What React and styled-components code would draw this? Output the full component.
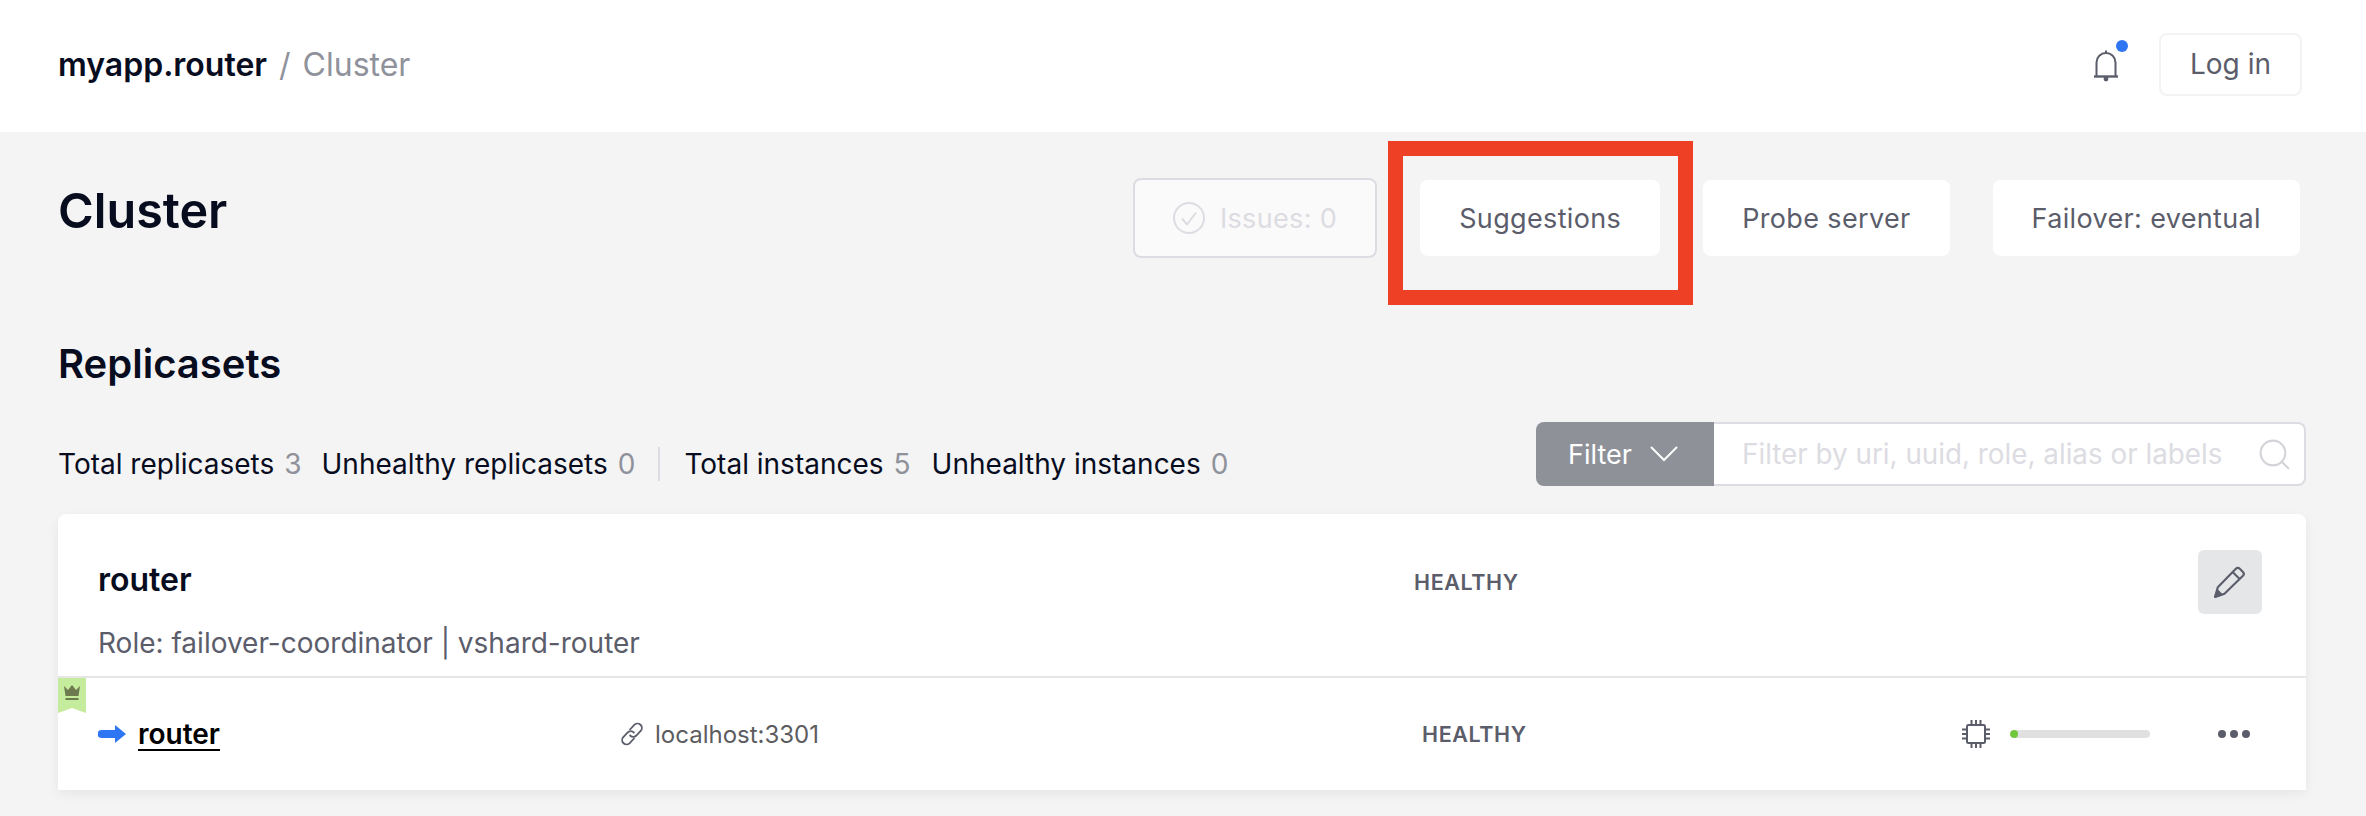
import styled, { createGlobalStyle } from 'styled-components'
import { Search } from 'lucide-react'

const GlobalStyles = createGlobalStyle`
	html, body {
		margin: 0;
		background: #f4f4f4;
		font-family: Inter, "Noto Sans", sans-serif;
		color: #070c1e;
	}
	* {
		box-sizing: border-box;
	}
`

const Page = styled.div`
	min-height: 816px;
	overflow: hidden;
`

const TopBar = styled.header`
	height: 132px;
	background: #fff;
	display: flex;
	align-items: center;
	justify-content: space-between;
	padding: 0 64px 4px 58px;
`

const Crumbs = styled.div`
	display: flex;
	align-items: baseline;
	font-size: 32px;
`

const AppName = styled.span`
	font-weight: 600;
`

const Slash = styled.span`
	color: #8f929b;
	margin: 0 12px;
`

const CrumbPage = styled.span`
	color: #8f929b;
`

const TopActions = styled.div`
	display: flex;
	align-items: center;
	gap: 41px;
`

const BellWrap = styled.div`
	position: relative;
	width: 24px;
	height: 32px;
	margin-top: 4px;
	svg {
		display: block;
	}
`

const BellDot = styled.span`
	position: absolute;
	top: -10px;
	right: -10px;
	width: 12px;
	height: 12px;
	border-radius: 50%;
	background: #2f76f5;
`

const LoginButton = styled.button`
	width: 143px;
	height: 63px;
	background: #fff;
	border: 2px solid #f3f3f3;
	border-radius: 8px;
	font: 400 28px Inter, sans-serif;
	color: #5b5d6b;
`

const Content = styled.main`
	padding: 0 60px 0 58px;
`

const TitleRow = styled.div`
	display: flex;
	justify-content: space-between;
	align-items: flex-start;
	padding: 46px 6px 0 0;
`

const PageTitle = styled.h1`
	margin: 0;
	font-size: 48.5px;
	line-height: 66px;
	font-weight: 600;
`

const Actions = styled.div`
	display: flex;
	align-items: center;
	gap: 43px;
`

const ActionButton = styled.button`
	position: relative;
	height: 76px;
	padding: 0 39px;
	background: #fff;
	border: 0;
	border-radius: 8px;
	font: 400 27px Inter, sans-serif;
	letter-spacing: 0.35px;
	color: #5b5d6b;
	white-space: nowrap;
`

const IssuesButton = styled(ActionButton)`
	display: flex;
	align-items: center;
	gap: 15px;
	height: 80px;
	padding: 0 38px;
	background: #fafafa;
	border: 2px solid #dcdce2;
	color: #dcdce2;
`

const Highlight = styled.span`
	position: absolute;
	top: -39px;
	bottom: -49px;
	left: -32px;
	right: -33px;
	border: 15px solid #ee4024;
	pointer-events: none;
`

const SectionTitle = styled.h2`
	margin: 80px 0 0;
	font-size: 40px;
	line-height: 52px;
	font-weight: 600;
`

const StatsRow = styled.div`
	display: flex;
	justify-content: space-between;
	align-items: center;
	margin-top: 32px;
`

const Stats = styled.div`
	display: flex;
	align-items: center;
	padding-top: 20px;
	font-size: 28px;
	font-weight: 400;
`

const Stat = styled.span`
	margin-right: ${(p) => p.$gap}px;
	white-space: nowrap;
`

const StatValue = styled.span`
	color: #8f929b;
	margin-left: 10px;
`

const StatDivider = styled.span`
	width: 2px;
	height: 34px;
	background: #dcdce2;
	margin-right: 24px;
`

const FilterGroup = styled.div`
	display: flex;
	width: 770px;
	height: 64px;
`

const FilterButton = styled.button`
	display: flex;
	align-items: center;
	gap: 18px;
	width: 178px;
	padding-left: 32px;
	background: #8e9198;
	border: 0;
	border-radius: 8px 0 0 8px;
	color: #fff;
	font: 400 27px Inter, sans-serif;
`

const FilterInput = styled.div`
	flex: 1;
	display: flex;
	align-items: center;
	justify-content: space-between;
	padding: 0 11px 0 28px;
	background: #fff;
	border: 2px solid #dcdce2;
	border-left: 0;
	border-radius: 0 8px 8px 0;
	color: #dcdce2;
	font-size: 27.8px;
	white-space: nowrap;
`

const Card = styled.section`
	margin-top: 28px;
	background: #fff;
	border-radius: 8px 8px 0 0;
	box-shadow: 0 4px 12px rgba(0, 0, 0, 0.06);
`

const CardHead = styled.div`
	display: grid;
	grid-template-columns: 1316px 1fr 64px;
	height: 162px;
	padding: 36px 44px 0 40px;
`

const NameBlock = styled.div`
	padding-top: 8px;
`

const ReplicaName = styled.div`
	font-size: 32px;
	line-height: 44px;
	font-weight: 600;
`

const RoleLine = styled.div`
	margin-top: 21px;
	font-size: 28px;
	line-height: 40px;
	color: #5b5d6b;
`

const Health = styled.div`
	display: flex;
	align-items: center;
	height: ${(p) => p.$h || 64}px;
	font-size: 21.5px;
	font-weight: 600;
	letter-spacing: 0.6px;
	color: #5b5d6b;
`

const EditButton = styled.button`
	width: 64px;
	height: 64px;
	display: flex;
	align-items: center;
	justify-content: center;
	padding: 0;
	background: #e5e6e8;
	border: 0;
	border-radius: 6px;
`

const InstanceRow = styled.div`
	position: relative;
	display: grid;
	grid-template-columns: 522px 802px 540px 256px auto;
	align-items: center;
	height: 114px;
	padding-left: 40px;
	border-top: 2px solid #e6e6e6;
`

const Bookmark = styled.span`
	position: absolute;
	top: 0;
	left: 0;
	width: 28px;
	height: 35px;
	display: flex;
	justify-content: center;
	padding-top: 7px;
	background: #c5eb9c;
	clip-path: polygon(0 0, 100% 0, 100% 100%, 50% 86%, 0 100%);
`

const InstanceName = styled.div`
	display: flex;
	align-items: center;
	gap: 12px;
`

const InstanceLink = styled.a`
	font-size: 28px;
	font-weight: 600;
	color: #000;
	text-decoration: underline;
	text-underline-offset: 5px;
	text-decoration-thickness: 2px;
`

const Uri = styled.div`
	display: flex;
	align-items: center;
	gap: 11px;
	font-size: 24px;
	color: #5c5c5f;
`

const Usage = styled.div`
	display: flex;
	align-items: center;
	gap: 20px;
`

const UsageBar = styled.div`
	width: 140px;
	height: 8px;
	border-radius: 4px;
	background: #e0e0e0;
	overflow: hidden;
`

const UsageFill = styled.div`
	height: 100%;
	border-radius: 4px;
	background: #6fc83a;
`

const MoreDots = styled.div`
	display: flex;
	gap: 4px;
`

const Dot = styled.span`
	width: 8px;
	height: 8px;
	border-radius: 50%;
	background: #5b5d6b;
`

const BellIcon = () => (
	<svg width="24" height="32" viewBox="0 0 24 32" fill="none" stroke="#5b5d6b" strokeWidth="2">
		<path d="M2.5 26V12.5a9.5 9.5 0 0 1 19 0V26" />
		<path d="M0 26.5h24" strokeWidth="2.4" />
		<path d="M12 0.5v3" />
		<circle cx="12" cy="29" r="2.4" fill="#5b5d6b" stroke="none" />
	</svg>
)

const CheckCircle = () => (
	<svg width="32" height="32" viewBox="0 0 32 32" fill="none" stroke="#dcdce2" strokeWidth="2">
		<circle cx="16" cy="16" r="15" />
		<path d="M9 16.5l5 6 9-12" />
	</svg>
)

const Chevron = () => (
	<svg width="28" height="16" viewBox="0 0 28 16" fill="none" stroke="#fff" strokeWidth="2">
		<path d="M1 1l13 13L27 1" />
	</svg>
)

const PencilIcon = () => (
	<svg width="34" height="34" viewBox="0 0 32 32" fill="none" stroke="#5b5d6b" strokeWidth="2" strokeLinejoin="round">
		<path d="M2 30l2.5-9L21.5 3.5a2.6 2.6 0 0 1 3.7 0l3 3a2.6 2.6 0 0 1 0 3.6L10.8 27z" />
		<path d="M18.5 6.5l6.8 6.8" />
		<path d="M2 30l6-2.2-3.8-3.8z" fill="#5b5d6b" />
	</svg>
)

const CrownIcon = () => (
	<svg width="16" height="16" viewBox="0 0 16 16" fill="#6c7a4e">
		<path d="M0 1l4 4 4-5 4 5 4-4-1.5 10h-13z" />
		<rect x="1.5" y="13" width="13" height="2" />
	</svg>
)

const ArrowIcon = () => (
	<svg width="28" height="18" viewBox="0 0 28 18" fill="#2f76f5">
		<path d="M3.5 5H17V0l11 9-11 9v-5H3.5a4 4 0 0 1 0-8z" />
	</svg>
)

const LinkIcon = () => (
	<svg width="24" height="24" viewBox="0 0 24 24" fill="none" stroke="#5b5d6b" strokeWidth="1.8" strokeLinecap="round">
		<path d="M10 7.5l4.5-4.8a4.4 4.4 0 0 1 6.4 6l-4.6 4.8a4.4 4.4 0 0 1-6.2 0" />
		<path d="M14 16.5l-4.5 4.8a4.4 4.4 0 0 1-6.4-6l4.6-4.8a4.4 4.4 0 0 1 6.2 0" />
	</svg>
)

const CpuIcon = () => (
	<svg width="28" height="28" viewBox="0 0 28 28" fill="none" stroke="#5b5d6b" strokeWidth="2">
		<rect x="5" y="5" width="18" height="18" rx="1.5" />
		<path d="M9.5 0v5M14 0v5M18.5 0v5M9.5 23v5M14 23v5M18.5 23v5M0 9.5h5M0 14h5M0 18.5h5M23 9.5h5M23 14h5M23 18.5h5" />
	</svg>
)

const App = () => {
	return (
		<Page>
			<GlobalStyles />
			<TopBar>
				<Crumbs>
					<AppName>myapp.router</AppName>
					<Slash>/</Slash>
					<CrumbPage>Cluster</CrumbPage>
				</Crumbs>
				<TopActions>
					<BellWrap>
						<BellIcon />
						<BellDot />
					</BellWrap>
					<LoginButton>Log in</LoginButton>
				</TopActions>
			</TopBar>
			<Content>
				<TitleRow>
					<PageTitle>Cluster</PageTitle>
					<Actions>
						<IssuesButton>
							<CheckCircle />
							Issues: 0
						</IssuesButton>
						<ActionButton>
							Suggestions
							<Highlight />
						</ActionButton>
						<ActionButton>Probe server</ActionButton>
						<ActionButton>Failover: eventual</ActionButton>
					</Actions>
				</TitleRow>
				<SectionTitle>Replicasets</SectionTitle>
				<StatsRow>
					<Stats>
						<Stat $gap={20}>
							Total replicasets<StatValue>3</StatValue>
						</Stat>
						<Stat $gap={23}>
							Unhealthy replicasets<StatValue>0</StatValue>
						</Stat>
						<StatDivider />
						<Stat $gap={21}>
							Total instances<StatValue>5</StatValue>
						</Stat>
						<Stat $gap={0}>
							Unhealthy instances<StatValue>0</StatValue>
						</Stat>
					</Stats>
					<FilterGroup>
						<FilterButton>
							Filter
							<Chevron />
						</FilterButton>
						<FilterInput>
							Filter by uri, uuid, role, alias or labels
							<Search size={37} strokeWidth={1.3} color="#d2d3d8" />
						</FilterInput>
					</FilterGroup>
				</StatsRow>
				<Card>
					<CardHead>
						<NameBlock>
							<ReplicaName>router</ReplicaName>
							<RoleLine>Role: failover-coordinator | vshard-router</RoleLine>
						</NameBlock>
						<Health>HEALTHY</Health>
						<EditButton>
							<PencilIcon />
						</EditButton>
					</CardHead>
					<InstanceRow>
						<Bookmark>
							<CrownIcon />
						</Bookmark>
						<InstanceName>
							<ArrowIcon />
							<InstanceLink>router</InstanceLink>
						</InstanceName>
						<Uri>
							<LinkIcon />
							localhost:3301
						</Uri>
						<Health $h={40}>HEALTHY</Health>
						<Usage>
							<CpuIcon />
							<UsageBar>
								<UsageFill style={{ width: '6%' }} />
							</UsageBar>
						</Usage>
						<MoreDots>
							<Dot />
							<Dot />
							<Dot />
						</MoreDots>
					</InstanceRow>
				</Card>
			</Content>
		</Page>
	)
}

export default App
